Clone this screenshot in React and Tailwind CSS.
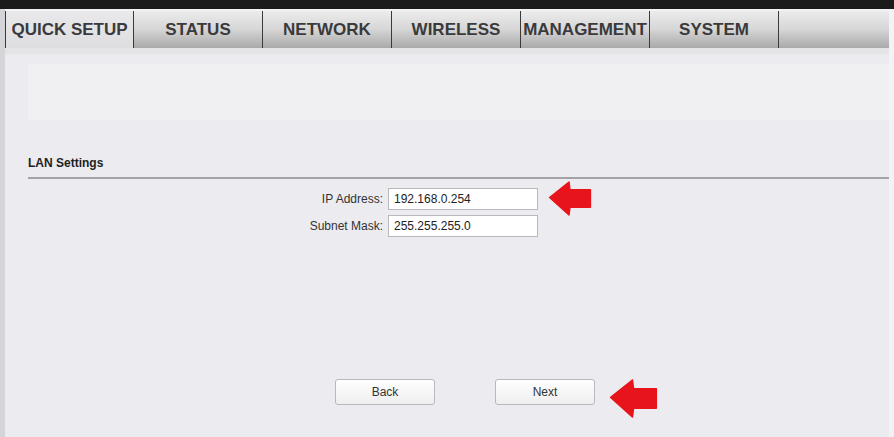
const TABS = ['QUICK SETUP', 'STATUS', 'NETWORK', 'WIRELESS', 'MANAGEMENT', 'SYSTEM'];

function RedArrow({ className }) {
  return (
    <svg viewBox="0 0 44 36" className={className}>
      <path
        d="M1 17 L21 1 L22 9 L43 9 L43 27 L22 27 L21 35 Z"
        fill="#e8141c"
        stroke="#e8141c"
        strokeWidth="1.5"
        strokeLinejoin="round"
      />
    </svg>
  );
}

function Field({ label, value }) {
  return (
    <div className="flex items-center h-[27px]">
      <span className="w-[383px] pr-[5px] text-right text-[12px] text-[#333]">{label}</span>
      <div className="w-[150px] h-[22px] bg-white border border-[#b9b9bd] px-[5px] flex items-center text-[12px] text-[#222]">
        {value}
      </div>
    </div>
  );
}

export default function App() {
  return (
    <div className="w-[894px] h-[437px] overflow-hidden bg-[#f3f3f6] font-['Liberation_Sans',Arial,sans-serif]">
      <div className="h-[9px] bg-[#1b1b1b]" />
      <div className="w-[889px] h-[428px] flex flex-col bg-[#ececf0] border-l-[5px] border-[#d5d5d9]">
        <nav className="flex h-[39px] border-t-2 border-[#f2f2f2] bg-gradient-to-b from-[#ececec] via-[#d6d6d6] to-[#a9a9a9]">
          {TABS.map((tab, i) => (
            <div
              key={tab}
              className={`w-[129px] shrink-0 flex items-center justify-center border-r border-[#3a3a3a] text-[17px] font-bold text-[#3a3a3c] ${
                i === 0 ? 'bg-gradient-to-b from-[#e9e9ec] to-[#dedee1] border-l border-l-[#3a3a3a]' : ''
              }`}
            >
              {tab}
            </div>
          ))}
        </nav>
        <div className="h-[6px] bg-[#e4e4e7]" />

        <div className="ml-[23px] mt-[10px] h-[56px] bg-[#f0f0f3]" />

        <div className="ml-[23px] mt-[39px] pb-[5px] border-b-2 border-[#a3a3a6] text-[12px] font-bold text-[#1e1e1e] h-[20px] flex items-end">
          LAN Settings
        </div>

        <div className="mt-[6px] flex flex-col">
          <div className="flex items-center h-[27px]">
            <Field label="IP Address:" value="192.168.0.254" />
            <RedArrow className="w-[44px] h-[35px] ml-[10px] -my-[4px]" />
          </div>
          <Field label="Subnet Mask:" value="255.255.255.0" />
        </div>

        <div className="mt-[140px] flex items-center pl-[330px] gap-[60px]">
          <button className="w-[100px] h-[26px] rounded-[3px] border border-[#b9b9bd] bg-gradient-to-b from-white to-[#eeeeef] text-[12px] text-[#333]">
            Back
          </button>
          <div className="flex items-center h-[26px]">
            <button className="w-[100px] h-[26px] rounded-[3px] border border-[#b9b9bd] bg-gradient-to-b from-white to-[#eeeeef] text-[12px] text-[#333]">
              Next
            </button>
            <RedArrow className="w-[51px] h-[39px] ml-[13px] mt-[6px] -mb-[6px]" />
          </div>
        </div>
      </div>
    </div>
  );
}
